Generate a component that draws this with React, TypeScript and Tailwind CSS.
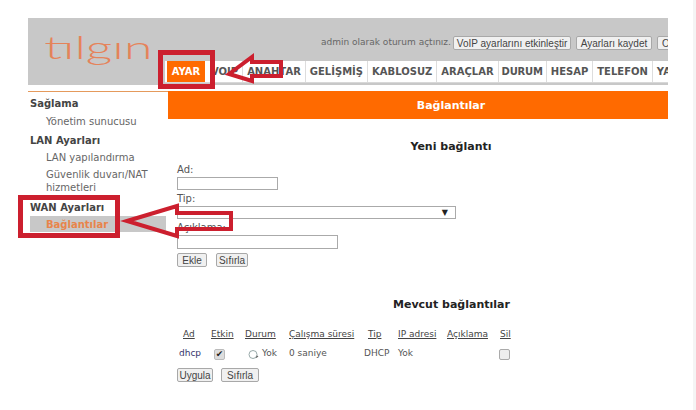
import React from "react";

const font = { fontFamily: '"DejaVu Sans", Verdana, sans-serif' };
const nav = ["VOIP", "ANAHTAR", "GELİŞMİŞ", "KABLOSUZ", "ARAÇLAR", "DURUM", "HESAP", "TELEFON", "YA"];

function Btn({ children, className = "" }: { children: React.ReactNode; className?: string }) {
  return (
    <span className={"inline-flex shrink-0 items-center justify-center h-[14px] border border-[#a8a8a8] bg-[#f0f0f0] rounded-[2px] text-[10px] text-[#444] font-['Liberation_Sans',sans-serif] whitespace-nowrap " + className}>
      {children}
    </span>
  );
}

export default function App() {
  return (
    <div className="relative w-[696px] h-[410px] overflow-hidden bg-white text-[#555]" style={font}>
      <div className="w-[640px] ml-[28px] pt-[18px]">
        <div className="h-[67px] bg-[#c8c8c8] relative flex flex-col overflow-hidden">
          <div className="flex h-[43px] items-start">
            <div className="w-[140px] pl-[10px] pt-[7px] text-[32px] leading-[44px] text-[#e5835a] font-['Lato',sans-serif] font-light shrink-0 origin-left scale-x-[1.62]">
              tılgın
            </div>
            <div className="flex-1 flex justify-start items-center gap-[4px] pt-[18px] pl-[153px] whitespace-nowrap">
              <span className="text-[9px] text-[#666] shrink-0 w-[128px]">admin olarak oturum açtınız.</span>
              <Btn className="w-[118px]">VoIP ayarlarını etkinleştir</Btn>
              <Btn className="w-[76px] ml-[1px]">Ayarları kaydet</Btn>
              <Btn className="w-[30px] justify-start pl-[4px] ml-[1px]">O</Btn>
            </div>
          </div>
          <div className="flex h-[22px] ml-[137px] bg-white border-b border-[#d8d8d8] text-[10px] font-bold text-[#555] whitespace-nowrap">
            <div className="w-[38px] shrink-0 bg-[#ff6a00] text-white flex items-center justify-center ml-[2px] mr-[2px]">AYAR</div>
            {nav.map((n) => (
              <div key={n} className={"flex items-center border-r border-[#ddd] last:border-r-0 " + (n === "DURUM" ? "px-[3px] tracking-[-0.2px]" : "px-[4px]")}>{n}</div>
            ))}
          </div>
        </div>
        <div className="flex mt-[6px]">
          <div className="w-[140px] border-t border-[#e59a5c] pt-[5px] text-[10px] shrink-0">
            <div className="font-bold text-[#444] leading-[14px] pl-[2px]">Sağlama</div>
            <div className="mt-[4px] pl-[18px] leading-[14px] text-[#666]">Yönetim sunucusu</div>
            <div className="mt-[5px] font-bold text-[#444] leading-[14px] pl-[2px]">LAN Ayarları</div>
            <div className="mt-[3px] pl-[18px] leading-[14px] text-[#666]">LAN yapılandırma</div>
            <div className="mt-[3px] pl-[18px] leading-[13px] text-[#666] w-[130px]">Güvenlik duvarı/NAT hizmetleri</div>
            <div className="mt-[7px] font-bold text-[#444] leading-[14px] pl-[2px]">WAN Ayarları</div>
            <div className="mt-[1px] ml-[2px] w-[136px] h-[16px] bg-[#c8c8c8] pl-[16px] flex items-center font-bold text-[#e8844a]">Bağlantılar</div>
          </div>
          <div className="flex-1">
            <div className="h-[28px] bg-[#ff6a00] text-white font-bold text-[11px] flex items-center justify-center pl-[66px] pt-[2px]">Bağlantılar</div>
            <div className="text-center font-bold text-[11px] text-[#222] mt-[21px] pl-[66px] leading-[14px]">Yeni bağlantı</div>
            <div className="pl-[9px] text-[10px] text-[#555]">
              <div className="mt-[9px] leading-[14px]">Ad:</div>
              <div className="w-[101px] h-[13px] border border-[#aaa]" />
              <div className="mt-[2px] leading-[14px]">Tip:</div>
              <div className="relative w-[279px] h-[13px] border border-[#aaa] text-[8px] text-[#222] text-right pr-[7px] leading-[12px]">▼</div>
              <div className="mt-[2px] leading-[14px]">Açıklama:</div>
              <div className="w-[161px] h-[14px] border border-[#aaa]" />
              <div className="flex gap-[9px] mt-[4px]">
                <Btn className="w-[30px]">Ekle</Btn>
                <Btn className="w-[32px]">Sıfırla</Btn>
              </div>
            </div>
            <div className="text-[11px] font-bold text-[#222] mt-[31px] ml-[225px] leading-[14px]">Mevcut bağlantılar</div>
            <div className="ml-[9px] mt-[15px] text-[9px]">
              <div className="flex leading-[14px] text-[#444] underline">
                <span className="w-[34px] pl-[6px]">Ad</span>
                <span className="w-[34px]">Etkin</span>
                <span className="w-[44px]">Durum</span>
                <span className="w-[79px]">Çalışma süresi</span>
                <span className="w-[30px]">Tip</span>
                <span className="w-[49px]">IP adresi</span>
                <span className="w-[53px]">Açıklama</span>
                <span>Sil</span>
              </div>
              <div className="flex items-center h-[18px] mt-[4px] text-[#555]">
                <span className="w-[37px] pl-[2px] text-[#33336b]">dhcp</span>
                <span className="w-[34px]">
                  <span className="flex w-[11px] h-[11px] items-center justify-center rounded-[2px] bg-[#ddd] border border-[#bbb] text-[9px] leading-none text-[#222]">✔</span>
                </span>
                <span className="w-[41px] flex items-center gap-[3px]">
                  <svg width="11" height="11" viewBox="0 0 11 11" fill="none" className="shrink-0"><circle cx="5" cy="5.5" r="4" stroke="#9aa" strokeWidth="1" /><path d="M8 8.5 L10 7" stroke="#666" strokeWidth="1.2" /></svg>
                  Yok
                </span>
                <span className="w-[75px]">0 saniye</span>
                <span className="w-[34px]">DHCP</span>
                <span className="w-[101px]">Yok</span>
                <span className="w-[11px] h-[11px] border border-[#aaa] bg-[#eee] rounded-[2px]" />
              </div>
              <div className="flex gap-[8px] mt-[5px]">
                <Btn className="w-[36px]">Uygula</Btn>
                <Btn className="w-[38px]">Sıfırla</Btn>
              </div>
            </div>
          </div>
        </div>
      </div>
      <div className="absolute top-0 right-0 w-[3px] h-full bg-[#f4f4f4]" />
      <svg className="absolute inset-0 pointer-events-none" width="696" height="410" fill="none" stroke="#cc1f2e" strokeWidth="4">
        <rect x="160.5" y="52.5" width="52" height="34" strokeWidth="5" />
        <rect x="20.5" y="197.5" width="97" height="38" strokeWidth="5" />
        <path d="M229 74 L252 57 V62 H281 V76 H252 V81 Z" />
        <path d="M127 221 L177 206 V213 H231 V229 H177 V236 Z" strokeWidth="4" />
      </svg>
    </div>
  );
}
